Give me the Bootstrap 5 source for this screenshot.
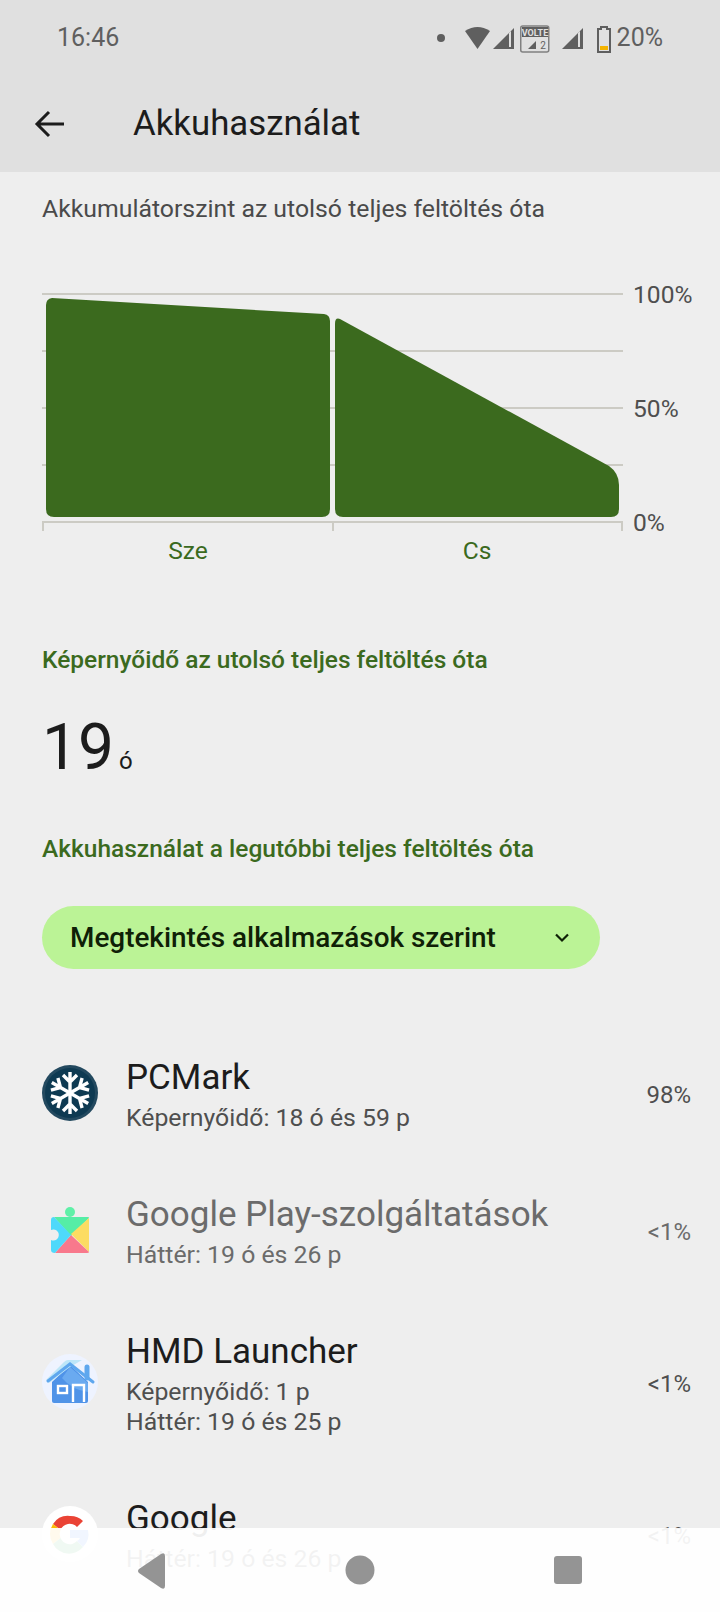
<!DOCTYPE html>
<html lang="hu">
<head>
    <meta charset="UTF-8">
    <meta name="viewport" content="width=device-width, initial-scale=1.0">
    <title>Akkuhasználat</title>
    <link href="https://cdn.jsdelivr.net/npm/bootstrap@5.3.0/dist/css/bootstrap.min.css" rel="stylesheet">
    <style>
        html, body { height: 1612px; overflow: hidden; }
        body { background: #eeeeee; font-family: Roboto, "Liberation Sans", sans-serif; color: #1c1c1c; position: relative; }
        .top-area { background: #e0e0e0; height: 172px; }
        .status-row { height: 74px; padding: 2px 57px 0 57px; color: #5f5f5f; font-size: 25px; }
        .app-title { height: 98px; padding-left: 34px; padding-top: 2px; }
        .app-title h1 { font-size: 34.8px; font-weight: 400; margin: 0 0 0 67px; color: #1c1c1c; }
        .main-pad { padding: 0 42px; }
        .chart-caption { font-size: 24.8px; color: #4a4a4a; line-height: 30px; margin: 22px 0 0; }
        .chart-box { display: block; margin-top: 47px; }
        .chart-lbl { font-size: 24.6px; fill: #4f4f4f; font-family: Roboto, sans-serif; }
        .chart-day { font-size: 24.6px; fill: #3b6a1e; font-family: Roboto, sans-serif; }
        .green-head { font-size: 24.5px; font-weight: 500; color: #3b6a1e; line-height: 30px; margin: 0; }
        .head-first { margin-top: 44px; }
        .big-num { font-size: 64px; line-height: 76px; margin: 35px 0 35px; }
        .big-num span { font-size: 24px; margin-left: 5px; }
        .pill-select { background: #bbf396; color: #0f2006; border-radius: 32px; height: 63px; width: 558px; padding: 0 30px 0 28px; font-size: 27.9px; font-weight: 500; margin-top: 42px; }
        .app-list { margin-top: 55px; }
        .app-row { padding: 0 29px 0 42px; height: 137px; }
        .app-row.tall-row { height: 167px; }
        .app-row .app-icon { width: 56px; height: 56px; flex: none; }
        .app-text { margin-left: 28px; }
        .app-name { font-size: 35px; line-height: 50px; }
        .app-sub { font-size: 24.8px; line-height: 30px; color: #4f4f4f; }
        .app-pct { font-size: 24px; color: #4f4f4f; padding-top: 4px; }
        .is-dim .app-name { color: #6b6b6b; }
        .is-dim .app-sub { color: #6b6b6b; }
        .is-dim .app-pct { color: #6b6b6b; }
        .nav-bottom { position: absolute; left: 0; right: 0; bottom: 0; height: 84px; background: rgba(255,255,255,.93); }
    </style>
</head>
<body>

    <!-- Status bar + title -->
    <div class="top-area">
        <div class="status-row d-flex align-items-center justify-content-between">
            <span>16:46</span>
            <div class="d-flex align-items-center gap-1">
                <svg width="176" height="32" viewBox="0 0 176 32">
                    <circle cx="4" cy="16" r="4" fill="#5f5f5f"/>
                    <path d="M28 9 Q40.500 1 53 9 L40.500 27 Z" fill="#5f5f5f"/>
                    <path d="M56 27 L77 6 V27 Z" fill="#5f5f5f"/>
                    <path d="M72 11 L74 9 V25 H72 Z" fill="#e0e0e0"/>
                    <rect x="83.750" y="4" width="28" height="26" rx="2" fill="#e0e0e0" stroke="#808080" stroke-width="1.500"/>
                    <rect x="85" y="5" width="26" height="10" fill="#5f5f5f"/>
                    <text x="98" y="13.500" font-size="9" font-weight="700" fill="#e0e0e0" text-anchor="middle" font-family="Roboto">VOLTE</text>
                    <path d="M91 27 L99 19 V27 Z" fill="#5f5f5f"/>
                    <text x="106" y="27" font-size="10" fill="#5f5f5f" text-anchor="middle" font-family="Roboto">2</text>
                    <path d="M125 27 L146 6 V27 Z" fill="#5f5f5f"/>
                    <path d="M141 11 L143 9 V25 H141 Z" fill="#e0e0e0"/>
                    <path d="M161 7 h3 v-2 h6 v2 h3 v23 h-12 Z" fill="none" stroke="#5f5f5f" stroke-width="2"/>
                    <rect x="163" y="24" width="8" height="4" fill="#f4b400"/>
                </svg>
                <span>20%</span>
            </div>
        </div>
        <div class="app-title d-flex align-items-center">
            <svg width="32" height="32" viewBox="0 0 32 32"><path d="M30 16 H4 M15 4 L3 16 L15 28" fill="none" stroke="#1c1c1c" stroke-width="3"/></svg>
            <h1>Akkuhasználat</h1>
        </div>
    </div>

    <div class="main-pad">
        <p class="chart-caption">Akkumulátorszint az utolsó teljes feltöltés óta</p>
    </div>

    <!-- Battery chart -->
    <svg class="chart-box" width="720" height="330" viewBox="0 -20 720 330">
        <g stroke="#cccbc4" stroke-width="2" fill="none">
            <path d="M42 3 H623 M42 60 H623 M42 117 H623 M42 174 H623 M42 231 H623"/>
            <path d="M43 231 V240 M333 231 V240 M622 231 V240"/>
        </g>
        <path fill="#3b6a1e" d="M46 14 Q46 8 52 7 L324 23 Q330 24 330 30 V218 Q330 226 322 226 H54 Q46 226 46 218 Z"/>
        <path fill="#3b6a1e" d="M335 33 Q335 26 340 28 L609 175 Q619 182 619 194 V218 Q619 226 611 226 H343 Q335 226 335 218 Z"/>
        <text class="chart-lbl" x="633" y="12">100%</text>
        <text class="chart-lbl" x="633" y="126">50%</text>
        <text class="chart-lbl" x="633" y="240">0%</text>
        <text class="chart-day" x="188" y="268" text-anchor="middle">Sze</text>
        <text class="chart-day" x="477" y="268" text-anchor="middle">Cs</text>
    </svg>

    <div class="main-pad">
        <p class="green-head head-first">Képernyőidő az utolsó teljes feltöltés óta</p>
        <p class="big-num">19<span>ó</span></p>
        <p class="green-head">Akkuhasználat a legutóbbi teljes feltöltés óta</p>
        <div class="pill-select d-flex align-items-center justify-content-between">
            <span>Megtekintés alkalmazások szerint</span>
            <svg width="16" height="10" viewBox="0 0 16 10"><path d="M2 1.500 L8 7.500 L14 1.500" fill="none" stroke="#0f2006" stroke-width="2.200"/></svg>
        </div>
    </div>

    <!-- App list -->
    <div class="app-list">
        <div class="app-row d-flex align-items-center">
            <svg class="app-icon" viewBox="0 0 56 56">
                <circle cx="28" cy="28" r="28" fill="#23495f"/>
                <circle cx="28" cy="28" r="25" fill="#0e3a52"/>
                <g stroke="#fff" stroke-width="3.400" fill="none">
                    <g id="arm"><path d="M28 28 V7 M21 10 L28 17 L35 10"/></g>
                    <use href="#arm" transform="rotate(60 28 28)"/>
                    <use href="#arm" transform="rotate(120 28 28)"/>
                    <use href="#arm" transform="rotate(180 28 28)"/>
                    <use href="#arm" transform="rotate(240 28 28)"/>
                    <use href="#arm" transform="rotate(300 28 28)"/>
                </g>
            </svg>
            <div class="app-text flex-grow-1">
                <div class="app-name">PCMark</div>
                <div class="app-sub">Képernyőidő: 18 ó és 59 p</div>
            </div>
            <div class="app-pct">98%</div>
        </div>
        <div class="app-row is-dim d-flex align-items-center">
            <svg class="app-icon" viewBox="0 0 56 56">
                <circle cx="28" cy="10" r="5" fill="#5ff0a8"/>
                <path d="M12 15 H46 Q47 15 47 16 L29 34 Z" fill="#55eda6"/>
                <path d="M47 16 V50 L29 32 Z" fill="#fcdc62"/>
                <path d="M47 50 Q47 51 45 51 H13 L29 33 Z" fill="#f8798c"/>
                <path d="M9 18 Q9 15 12 15 L29 33 L13 51 Q9 51 9 48 V38 A5.500 5.500 0 1 0 9 28 Z" fill="#4ed9fb"/>
            </svg>
            <div class="app-text flex-grow-1">
                <div class="app-name">Google Play-szolgáltatások</div>
                <div class="app-sub">Háttér: 19 ó és 26 p</div>
            </div>
            <div class="app-pct">&lt;1%</div>
        </div>
        <div class="app-row tall-row d-flex align-items-center">
            <svg class="app-icon" viewBox="0 0 56 56">
                <circle cx="28" cy="28" r="28" fill="#eef3ff"/>
                <path d="M10 28 L28 11 L46 28 V47 Q46 49 44 49 H12 Q10 49 10 47 Z" fill="#4f93e8"/>
                <path d="M28 13 L46 29 V38 Q30 36 20 24 Z" fill="#6aaaf0"/>
                <path d="M4 26 L22 8 Q24 6 26 6 L40 6 L28 13 L7 29 Z" fill="#bde6f8"/>
                <path d="M6 27 L28 10 L51 28" fill="none" stroke="#5ea7ee" stroke-width="3" stroke-linecap="round"/>
                <path d="M45 13 V24" stroke="#5ea7ee" stroke-width="5" stroke-linecap="round"/>
                <rect x="16" y="32" width="9" height="7" fill="none" stroke="#fff" stroke-width="2.400"/>
                <path d="M31 48 V31 H42 V48" fill="none" stroke="#fff" stroke-width="2.400"/>
            </svg>
            <div class="app-text flex-grow-1">
                <div class="app-name">HMD Launcher</div>
                <div class="app-sub">Képernyőidő: 1 p</div>
                <div class="app-sub">Háttér: 19 ó és 25 p</div>
            </div>
            <div class="app-pct">&lt;1%</div>
        </div>
        <div class="app-row d-flex align-items-center">
            <svg class="app-icon" viewBox="0 0 56 56">
                <circle cx="28" cy="28" r="28" fill="#fff"/>
                <path d="M28 10 A18 18 0 0 1 41 15 L35 21 A10 10 0 0 0 18.500 24 L11 18 A18 18 0 0 1 28 10 Z" fill="#ea4335"/>
                <path d="M11 18 L18.500 24 A10 10 0 0 0 18.500 32 L11 38 A18 18 0 0 1 11 18 Z" fill="#fbbc05"/>
                <path d="M11 38 L18.500 32 A10 10 0 0 0 35 35 L41 41 A18 18 0 0 1 11 38 Z" fill="#34a853"/>
                <path d="M46 24 H28 V32 H38 A10 10 0 0 1 35 35 L41 41 A18 18 0 0 0 46 24 Z" fill="#4285f4"/>
            </svg>
            <div class="app-text flex-grow-1">
                <div class="app-name">Google</div>
                <div class="app-sub">Háttér: 19 ó és 26 p</div>
            </div>
            <div class="app-pct">&lt;1%</div>
        </div>
    </div>

    <!-- Android nav bar -->
    <div class="nav-bottom">
        <svg width="720" height="84" viewBox="0 0 720 84" class="d-block">
            <path d="M139 41 Q137 43 139 45 L161 60 Q165 62 165 58 V28 Q165 24 161 26 Z" fill="#949494"/>
            <circle cx="360" cy="42" r="14.500" fill="#949494"/>
            <rect x="554" y="28" width="28" height="28" rx="3" fill="#949494"/>
        </svg>
    </div>

    <script src="https://cdn.jsdelivr.net/npm/bootstrap@5.3.0/dist/js/bootstrap.bundle.min.js"></script>
</body>
</html>
